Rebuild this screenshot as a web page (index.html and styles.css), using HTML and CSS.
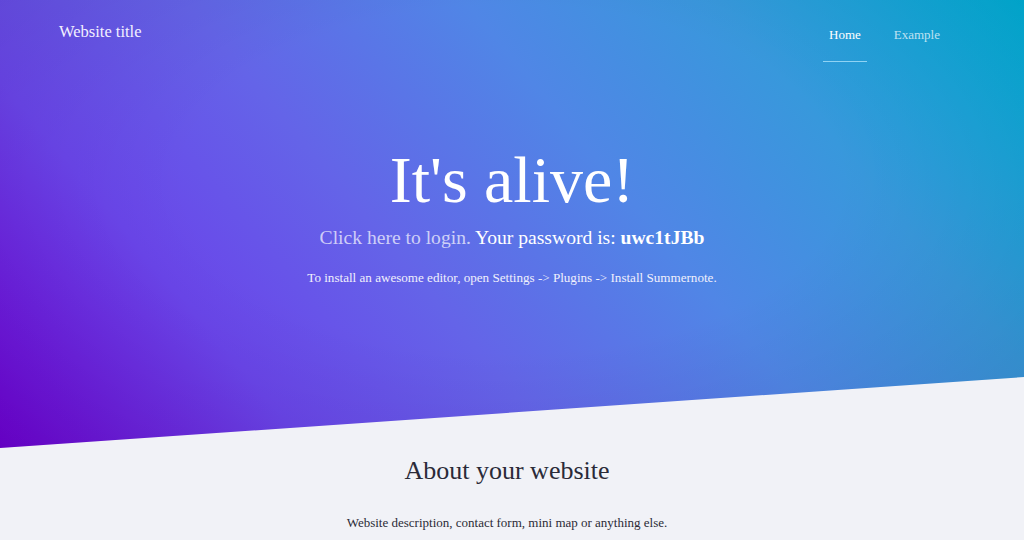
FILE: index.html
```
<!DOCTYPE html>
<html lang="en">
<head>
    <meta charset="UTF-8">
    <title>Website title</title>
    <link rel="stylesheet" href="styles.css">
</head>
<body>
    <header class="hero">
        <nav class="topbar">
            <a class="brand" href="#">Website title</a>
            <ul class="menu">
                <li class="active"><a href="#">Home</a></li>
                <li><a href="#">Example</a></li>
            </ul>
        </nav>

        <div class="intro">
            <h1>It's alive!</h1>
            <h4><a href="#">Click here to login.</a> Your password is: <b>uwc1tJBb</b></h4>
            <p>To install an awesome editor, open Settings -&gt; Plugins -&gt; Install Summernote.</p>
        </div>
    </header>

    <section class="about">
        <h2>About your website</h2>
        <p>Website description, contact form, mini map or anything else.</p>
    </section>
</body>
</html>
```

FILE: styles.css
```
body {
    margin: 0;
    font-family: "Liberation Serif", "Times New Roman", serif;
    background: #f1f2f7;
    color: #2b2b36;
}
a {
    text-decoration: none;
}
.hero {
    height: 448px;
    color: #fff;
    background:
        radial-gradient(ellipse at 50% 40%, rgba(0, 0, 0, 0) 45%, rgba(0, 0, 0, 0.1) 100%),
        linear-gradient(50deg, #7000d8 0%, #6a45ea 22%, #6464e8 40%, #5086e6 60%, #3898dc 78%, #00b0d8 100%);
    clip-path: polygon(0 0, 100% 0, 100% 377px, 0 100%);
}
.topbar {
    display: flex;
    justify-content: space-between;
    align-items: flex-start;
    padding: 0 78px 0 59px;
}
.brand {
    color: #f2f0ff;
    font-size: 16.5px;
    line-height: 22px;
    margin-top: 21px;
}
.menu {
    display: flex;
    gap: 21px;
    list-style: none;
    margin: 0;
    padding: 0;
}
.menu a {
    display: block;
    padding: 25px 6px 16px;
    font-size: 13px;
    line-height: 20px;
    color: rgba(255, 255, 255, 0.72);
    border-bottom: 1px solid transparent;
}
.menu .active a {
    color: #fff;
    border-bottom-color: #8fd3f4;
}
.intro {
    text-align: center;
    padding-top: 78px;
}
.intro h1 {
    margin: 0;
    font-size: 66px;
    font-weight: normal;
    line-height: 80px;
}
.intro h4 {
    margin: 5px 0 0;
    font-size: 19.6px;
    font-weight: normal;
    line-height: 26px;
}
.intro h4 a {
    color: rgba(255, 255, 255, 0.7);
}
.intro p {
    margin: 17px 0 0;
    font-size: 13.1px;
    line-height: 20px;
    color: #f0f0fc;
}
.about {
    text-align: center;
    padding: 6px 10px 0 0;
}
.about h2 {
    margin: 0;
    font-size: 26px;
    font-weight: normal;
    line-height: 34px;
    color: #2a2a38;
}
.about p {
    margin: 25px 0 0;
    font-size: 13px;
    line-height: 20px;
}
```
